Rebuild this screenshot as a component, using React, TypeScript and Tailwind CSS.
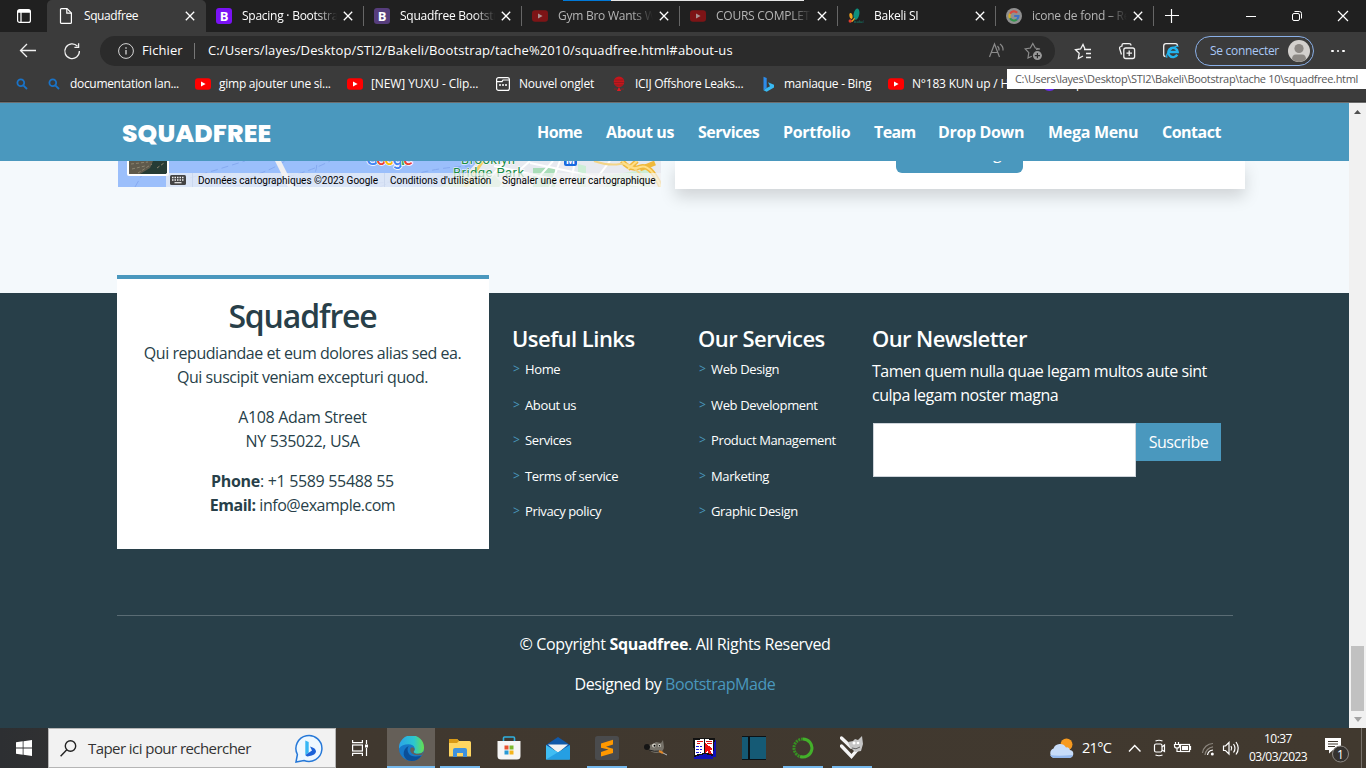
import React from "react";

type Kids = { children?: React.ReactNode; className?: string };

const YouTube = ({ dim = false }: { dim?: boolean }) => (
  <svg width="16" height="16" viewBox="0 0 16 16" className="shrink-0">
    <rect x="0" y="2.2" width="16" height="11.6" rx="3" fill={dim ? "#7d1416" : "#ff0000"} />
    <path d="M6 5.4L10.6 8L6 10.6Z" fill={dim ? "#a89090" : "#fff"} />
  </svg>
);

const BootstrapIcon = ({ dark = false }: { dark?: boolean }) => (
  <span
    className={
      "flex h-4 w-4 shrink-0 items-center justify-center rounded-[3px] text-[13px] leading-none font-bold text-white " +
      (dark ? "bg-[#563d7c]" : "bg-[#7a12f5]")
    }
  >
    B
  </span>
);

const FileIcon = () => (
  <svg width="16" height="16" viewBox="0 0 16 16" className="shrink-0" fill="none" stroke="#fff" strokeWidth="1.2">
    <path d="M3.5 .6H9L13.4 5V14.4Q13.4 15.4 12.4 15.4H3.5Q2.5 15.4 2.5 14.4V1.6Q2.5 .6 3.5 .6Z" />
    <path d="M8.8 .8V5.2H13.2" />
  </svg>
);

const BakeliIcon = () => (
  <svg width="16" height="16" viewBox="0 0 17 16" className="shrink-0">
    <ellipse cx="9" cy="6" rx="3" ry="6" fill="#0f8f7c" transform="rotate(12 9 6)" />
    <ellipse cx="3.2" cy="8" rx="1.7" ry="3.2" fill="#f4a51c" transform="rotate(-10 3.2 8)" />
    <circle cx="2.4" cy="13.3" r="1.8" fill="#e23b2e" />
    <path d="M4 14L7 10.5" stroke="#f4a51c" strokeWidth="1.5" />
    <text x="6.5" y="15.8" fontSize="4.4" fontFamily="Open Sans" fill="#0f8f7c">bakeli</text>
  </svg>
);

const GoogleIcon = () => (
  <svg width="16" height="16" viewBox="0 0 16 16" className="shrink-0">
    <circle cx="8" cy="8" r="8" fill="#909090" />
    <g fill="none" strokeWidth="2.2">
      <path d="M11.2 4.7A4.6 4.6 0 0 0 4 5.7" stroke="#d94a3e" />
      <path d="M4 5.7A4.6 4.6 0 0 0 4 10.3" stroke="#d5ad23" />
      <path d="M4 10.3A4.6 4.6 0 0 0 10.9 11.5" stroke="#35944e" />
      <path d="M8.2 8H12.5A4.6 4.6 0 0 1 10.9 11.5" stroke="#3d72c4" />
    </g>
  </svg>
);

const Close = () => (
  <svg width="10" height="10" viewBox="0 0 10 10" className="shrink-0" stroke="#fff" strokeWidth="1.3">
    <path d="M.8 .8L9.2 9.2M9.2 .8L.8 9.2" />
  </svg>
);

function Tab({ icon, title, dim }: { icon: React.ReactNode; title: string; dim?: boolean }) {
  return (
    <div className="relative flex h-8 w-[158px] shrink-0 items-center pl-[10px]">
      {icon}
      <span
        className={
          "ml-[10px] w-[95px] overflow-hidden whitespace-nowrap text-[12px] tracking-[-0.25px] [mask-image:linear-gradient(to_right,black_78%,transparent)] " +
          (dim ? "text-[#b4b4b4]" : "text-white")
        }
      >
        {title}
      </span>
      <span className="ml-[6px]"><Close /></span>
      <span className="absolute top-[6px] right-0 h-5 w-px bg-[#666]" />
    </div>
  );
}

function TabStrip() {
  return (
    <div className="relative flex h-8 bg-[#202020] text-white">
      <div className="flex w-[47px] shrink-0 items-center pl-[17px]">
        <svg width="14" height="14" viewBox="0 0 14 14" fill="none" stroke="#fff" strokeWidth="1.2">
          <rect x=".6" y=".6" width="12.8" height="12.8" rx="2" />
          <path d="M.6 3.2H13.4M4 3.2V13.4" />
          <path d="M1 2H13" strokeWidth="2" />
        </svg>
      </div>
      <div className="flex w-[159px] shrink-0 items-center rounded-t-[5px] bg-[#3b3b3b] pl-[11px]">
        <FileIcon />
        <span className="ml-[10px] w-[101px] text-[12px] tracking-[-0.4px]">Squadfree</span>
        <Close />
      </div>
      <Tab icon={<BootstrapIcon />} title="Spacing · Bootstrap" />
      <Tab icon={<BootstrapIcon dark />} title="Squadfree Bootstrap" />
      <Tab icon={<YouTube dim />} title="Gym Bro Wants Wo" dim />
      <Tab icon={<YouTube dim />} title="COURS COMPLET D" dim />
      <Tab icon={<BakeliIcon />} title="Bakeli SI" />
      <Tab icon={<GoogleIcon />} title="icone de fond – Rec" dim />
      <div className="flex flex-1 items-center">
        <svg width="212" height="32" viewBox="1154 0 212 32" fill="none" stroke="#fff" strokeWidth="1.2">
          <path d="M1165 15.5H1179M1171.5 9V23" />
          <path d="M1246 16.5H1256" strokeWidth="1" />
          <rect x="1292.5" y="13.5" width="7" height="7" rx="1.5" strokeWidth="1" />
          <path d="M1294.500 11.500H1299.500Q1301.500 11.500 1301.500 13.500V18.500" strokeWidth="1" />
          <path d="M1338 11L1348 21M1348 11L1338 21" />
        </svg>
      </div>
      <div className="absolute top-0 left-[563px] flex h-px w-[241px]">
        <span className="w-12 bg-[#0078d7]" />
        <span className="flex-1 bg-[#e6e6e6]" />
      </div>
    </div>
  );
}

function Toolbar() {
  return (
    <div className="flex h-9 items-center bg-[#3b3b3b] text-white">
      <svg width="100" height="36" viewBox="0 32 100 36" className="shrink-0" fill="none" stroke="#f2f2f2" strokeWidth="1.3">
        <path d="M20.500 50.500H36M27 44L20.500 50.500L27 57" />
        <path d="M77.500 46.300A7.300 7.300 0 1 0 79.400 51" />
        <path d="M78.600 43.200V47.400H74.400" />
      </svg>
      <div className="mt-px flex h-[30px] w-[955px] items-center rounded-full bg-[#2b2b2b] pl-[18px]">
        <svg width="16" height="16" viewBox="0 0 16 16" fill="none" stroke="#d6d6d6" className="shrink-0">
          <circle cx="8" cy="8" r="7.400" />
          <path d="M8 7V11.500M8 4.300V5.700" strokeWidth="1.300" />
        </svg>
        <span className="ml-2 w-[52px] text-[13px] tracking-[0.1px]">Fichier</span>
        <span className="h-4 w-px bg-[#777]" />
        <span className="ml-[13px] w-[780px] text-[13px] tracking-[0.115px] whitespace-nowrap">
          C:/Users/layes/Desktop/STI2/Bakeli/Bootstrap/tache%2010/squadfree.html#about-us
        </span>
        <svg width="56" height="20" viewBox="988 41 56 20" fill="none" stroke="#8c8c8c" strokeWidth="1.2" className="shrink-0">
          <path d="M989.500 57L994.500 44L999.500 57M991.300 52.500H997.700M997.500 46Q999.500 48 999 50.500M1000 44Q1003.500 46.500 1003 50.500" />
          <path d="M1036 49.500L1040 49L1035.300 48L1032.800 43.500L1030.300 48L1025.200 49L1028.800 52.700L1028 58L1031.800 56.200" />
          <circle cx="1037.400" cy="55.600" r="4.500" fill="#999" stroke="none" />
          <path d="M1037.400 53V58.200M1034.800 55.600H1040" stroke="#2b2b2b" />
        </svg>
      </div>
      <svg width="140" height="36" viewBox="1055 32 140 36" className="shrink-0" fill="none" stroke="#f2f2f2" strokeWidth="1.3">
        <path d="M1085 49L1083 44.500L1080.600 49L1075.500 49.800L1079.200 53.300L1078.300 58.500L1083 56" />
        <path d="M1084 49.500H1091M1086 53.500H1091M1086 57.500H1091" />
        <rect x="1123.800" y="48" width="10.800" height="10.500" rx="2" />
        <path d="M1129.200 50.500V56M1126.500 53.200H1132" />
        <path d="M1121.500 54.500L1119.600 48.500Q1119.200 47 1120.700 46.500L1122 46V45Q1122 43.700 1123.500 43.700H1129Q1131 43.700 1131 45.500" />
        <path d="M1165.500 56.500Q1163.700 56.500 1163.700 54.500V46Q1163.700 43.700 1166 43.700H1175.500Q1177.500 43.700 1177.500 46" />
        <path d="M1177.200 54.600A4.700 4.700 0 1 1 1177.700 52H1169" stroke="#23b4ee" strokeWidth="2.4" />
        <path d="M1167 57.800Q1165.500 54 1171 49.500T1178.500 46.500" stroke="#23b4ee" strokeWidth="1.200" />
      </svg>
      <div className="mt-px flex h-[30px] w-[119px] items-center rounded-full border border-[#8ab0e8] pl-[14px]">
        <span className="w-[78px] text-[12px] tracking-[-0.3px] whitespace-nowrap text-[#a9c7f5]">Se connecter</span>
        <svg width="22" height="22" viewBox="0 0 22 22" className="shrink-0">
          <circle cx="11" cy="11" r="11" fill="#d3d0cd" />
          <circle cx="11" cy="8.500" r="4.600" fill="#8c8884" />
          <path d="M4 19.300Q4 14.500 8 14.500H14Q18 14.500 18 19.300Q15 22 11 22T4 19.300Z" fill="#8c8884" />
        </svg>
      </div>
      <div className="mt-[2px] ml-[17px] flex gap-[3px]">
        <span className="size-[2.5px] rounded-full bg-white" />
        <span className="size-[2.5px] rounded-full bg-white" />
        <span className="size-[2.5px] rounded-full bg-white" />
      </div>
    </div>
  );
}

const Magnifier = () => (
  <svg width="12" height="12" viewBox="0 0 12 12" fill="none" stroke="#1a73c7" strokeWidth="1.800" className="shrink-0">
    <circle cx="4.800" cy="4.800" r="3.400" />
    <path d="M7.300 7.300L11 11" />
  </svg>
);

const Mark = ({ children, className = "" }: Kids) => (
  <div className={"flex shrink-0 items-center gap-2 text-[12px] whitespace-nowrap text-white " + className}>{children}</div>
);

function Bookmarks() {
  return (
    <div className="relative flex h-[34px] items-center border-b border-[#333] bg-[#3b3b3b] pb-[2px] pl-[16px]">
      <Mark className="w-8"><Magnifier /></Mark>
      <Mark className="w-[147px] tracking-[-0.32px]"><Magnifier /><span className="ml-[2px]">documentation lan...</span></Mark>
      <Mark className="w-[152px] tracking-[-0.25px]"><YouTube />gimp ajouter une si...</Mark>
      <Mark className="w-[148px] tracking-[-0.1px]"><YouTube />[NEW] YUXU - Clip...</Mark>
      <Mark className="w-[116px] tracking-[-0.2px]">
        <svg width="16" height="16" viewBox="0 0 16 16" fill="none" stroke="#fff" strokeWidth="1.200">
          <rect x="1.600" y="1.600" width="12.800" height="12.800" rx="2" />
          <path d="M1.600 5.600H7L8 4H14.400" />
          <path d="M4 9H12" strokeDasharray="2 1" strokeWidth="1.600" />
        </svg>
        Nouvel onglet
      </Mark>
      <Mark className="w-[149px] tracking-[-0.27px]">
        <svg width="16" height="16" viewBox="0 0 16 16">
          <circle cx="8" cy="5.800" r="5.300" fill="#c4161c" />
          <path d="M3.500 4H12.500M3 6.500H13M4 9H12" stroke="#8d1a1e" strokeWidth=".8" />
          <path d="M8 11L10.200 15H5.800Z" fill="#e01b22" />
          <path d="M3 13H6M10 13H13" stroke="#8d2023" />
        </svg>
        ICIJ Offshore Leaks...
      </Mark>
      <Mark className="w-[128px] tracking-[-0.25px]">
        <svg width="16" height="16" viewBox="0 0 16 16">
          <path d="M3.500 .8L6.700 2V12L3.500 14.300Z" fill="#2d8bea" />
          <path d="M3.500 14.300L6.700 12L10 10.300L8 6.200L14 8.700V11.400L6.700 15.700Z" fill="#39b9f2" />
        </svg>
        maniaque - Bing
      </Mark>
      <Mark className="w-[154px] tracking-[-0.2px]"><YouTube />N°183 KUN up / HU</Mark>
      <Mark className="gap-[6px]"><span className="h-[15px] w-[15px] rounded-full bg-[#6b2cf0]" />Expo</Mark>
      <div className="absolute top-px right-0 z-10 flex h-5 w-[359px] items-center bg-white pl-2 text-[11px] tracking-[-0.32px] whitespace-nowrap text-[#575757]">
        C:\Users\layes\Desktop\STI2\Bakeli\Bootstrap\tache 10\squadfree.html
      </div>
    </div>
  );
}

function SiteNav() {
  return (
    <nav className="relative z-10 flex h-[58px] items-center bg-[#4a98be] pl-[122px] text-[16px] font-bold whitespace-nowrap text-white">
      <span className="w-[415px] pt-[2px] font-[Poppins,Inter,sans-serif] text-[25px] leading-none font-extrabold tracking-[0.12px]">SQUADFREE</span>
      <a className="w-[69px] tracking-[-0.6px]">Home</a>
      <a className="w-[92px] tracking-[-0.4px]">About us</a>
      <a className="w-[85px] tracking-[-0.5px]">Services</a>
      <a className="w-[91px] tracking-[-0.3px]">Portfolio</a>
      <a className="w-[64px] tracking-[-0.6px]">Team</a>
      <a className="w-[110px] tracking-[-0.35px]">Drop Down</a>
      <a className="w-[114px] tracking-[-0.3px]">Mega Menu</a>
      <a className="tracking-[-0.5px]">Contact</a>
    </nav>
  );
}

function MapStrip() {
  return (
    <div className="relative h-[26px] w-[543px] overflow-hidden">
      <svg width="543" height="26" viewBox="118 161 543 26" className="block" fontFamily="Roboto, sans-serif">
        <rect x="118" y="161" width="543" height="26" fill="#9bbffb" />
        <g fill="none" stroke="#86aaf0" strokeDasharray="7 4">
          <path d="M135 187L150 161M190 178L245 161M205 187Q260 178 285 161M222 187Q290 182 330 161M300 187Q320 175 316 161M355 187Q380 180 460 180M380 187Q420 168 470 166M395 187Q430 175 475 172" />
        </g>
        <path d="M275 161L281 161L294 187H288Z" fill="#f0eff0" />
        <path d="M452 187L463 177L478 161H661V187Z" fill="#e8eaf0" />
        <path d="M440 187L465 174L490 170L505 187Z" fill="#c5e8cc" />
        <path d="M533 187V168H555V187Z" fill="#a9ddb8" />
        <path d="M578 187V164L586 166V187ZM610 175L650 169V187H605Z" fill="#cdeed6" />
        <g fill="none" stroke="#fff" strokeWidth="2">
          <path d="M488 180L505 161M500 187L530 161M530 187L553 161M494 166L575 184M530 163L640 186M560 161L550 187M610 161L590 187M575 161L570 187" />
        </g>
        <path d="M465 187L483 161" stroke="#f6cf65" strokeWidth="3" />
        <g fill="none">
          <path d="M622 161Q630 171 640 167T661 187M628 169L637 161M655 163L640 169" stroke="#f0b93c" strokeWidth="5" />
          <path d="M594 161Q608 166 620 164T645 180" stroke="#f3d588" strokeWidth="2" />
          <path d="M622 161Q630 171 640 167T661 187M628 169L637 161" stroke="#ffe08a" strokeWidth="2" />
        </g>
        <rect x="127" y="155" width="42" height="21" rx="2" fill="#fff" />
        <rect x="129" y="155" width="38" height="19" fill="#263c35" />
        <path d="M129 161H153L150 168L140 174H129Z" fill="#5f5a4c" />
        <path d="M131 164L148 162M132 169L145 166M138 173L152 164M157 168L164 163" stroke="#8b8470" strokeWidth="1" strokeDasharray="3 2" />
        <text x="366" y="165" fontSize="18" fontWeight="500" stroke="#fff" strokeWidth="1.500" paintOrder="stroke" textLength="47">
          <tspan fill="#4285f4">G</tspan><tspan fill="#ea4335">o</tspan><tspan fill="#fbbc04">o</tspan><tspan fill="#4285f4">g</tspan><tspan fill="#34a853">l</tspan><tspan fill="#ea4335">e</tspan>
        </text>
        <g fill="#188a45" stroke="#fff" strokeWidth="1" paintOrder="stroke" fontSize="13">
          <text x="461" y="164" textLength="54">Brooklyn</text>
          <text x="453" y="177" textLength="71">Bridge Park</text>
        </g>
        <rect x="564" y="152" width="13" height="14" rx="2" fill="#1769e0" />
        <text x="566" y="164" fontSize="10" fontWeight="700" fill="#fff">M</text>
      </svg>
      <div className="absolute right-0 bottom-0 flex h-[14px] w-[495px] items-center bg-[#f5f5f5]/70 font-[Roboto] text-[10px] whitespace-nowrap text-black">
        <svg width="16" height="10" viewBox="0 0 16 10" className="ml-1 shrink-0">
          <rect width="16" height="10" rx="1.500" fill="#444" />
          <path d="M2 2.500H14M2 5H14" stroke="#eee" strokeWidth="1.300" strokeDasharray="1.500 1" />
          <path d="M4.500 7.700H11.500" stroke="#eee" strokeWidth="1.200" />
        </svg>
        <span className="ml-[6px] w-[192px] shrink-0 border-l border-[#cbd8ee] pl-[5px] tracking-[-0.03px]">Données cartographiques ©2023 Google</span>
        <span className="w-[118px] shrink-0 border-l border-[#cbd8ee] pl-[5px]">Conditions d'utilisation</span>
        <span className="shrink-0">Signaler une erreur cartographique</span>
      </div>
    </div>
  );
}

function LinkColumn({ title, items, className }: { title: string; items: string[]; className: string }) {
  return (
    <div className={"shrink-0 pt-[30px] " + className}>
      <h4 className="-ml-px text-[22px] leading-[30px] font-semibold tracking-[-0.52px] whitespace-nowrap">{title}</h4>
      <ul className="pt-[5px]">
        {items.map((item) => (
          <li key={item} className="flex h-[35.500px] items-start gap-[5px] text-[13px] leading-[22px] tracking-[-0.37px] whitespace-nowrap">
            <span className="w-[7px] text-[12px] text-[#4a98be]">&gt;</span>
            {item}
          </li>
        ))}
      </ul>
    </div>
  );
}

function Footer() {
  return (
    <footer className="h-[435px] bg-[#283f49] pl-[117px] text-[16px] leading-6 text-white">
      <div className="flex h-[322px]">
        <div className="relative -mt-[18px] h-[274px] w-[372px] shrink-0 border-t-4 border-[#4a98be] bg-white pt-[18px] pr-px text-center text-[#283f49]">
          <h2 className="mb-[6px] text-[32px] leading-[38px] font-semibold tracking-[-1.15px]">Squadfree</h2>
          <p className="mb-4 tracking-[-0.45px]">Qui repudiandae et eum dolores alias sed ea.<br />Qui suscipit veniam excepturi quod.</p>
          <p className="mb-4 tracking-[-0.36px]">A108 Adam Street<br />NY 535022, USA</p>
          <p className="tracking-[-0.32px]"><b>Phone</b>: +1 5589 55488 55</p>
          <p className="tracking-[-0.47px]"><b>Email:</b> info@example.com</p>
        </div>
        <LinkColumn className="w-[210px] pl-6" title="Useful Links" items={["Home", "About us", "Services", "Terms of service", "Privacy policy"]} />
        <LinkColumn className="w-[174px]" title="Our Services" items={["Web Design", "Web Development", "Product Management", "Marketing", "Graphic Design"]} />
        <div className="pt-[30px] whitespace-nowrap">
          <h4 className="-ml-px text-[22px] leading-[30px] font-semibold tracking-[-0.62px]">Our Newsletter</h4>
          <p className="mt-[6px] -ml-px tracking-[-0.47px]">Tamen quem nulla quae legam multos aute sint<br />culpa legam noster magna</p>
          <div className="mt-4 flex items-start">
            <div className="h-[54px] w-[263px] border border-[#ced4da] bg-white" />
            <button className="h-[38px] w-[85px] bg-[#4a98be] tracking-[-0.45px]">Suscribe</button>
          </div>
        </div>
      </div>
      <div className="w-[1116px] border-t border-[#5a6c74] pt-4 text-center">
        <p className="tracking-[-0.33px]">© Copyright <b>Squadfree</b>. All Rights Reserved</p>
        <p className="mt-4 tracking-[-0.43px]">Designed by <span className="text-[#4a98be]">BootstrapMade</span></p>
      </div>
    </footer>
  );
}

function Scrollbar() {
  return (
    <div className="flex w-[17px] flex-col items-center bg-[#f1f1f1] pt-[7px]">
      <svg width="7" height="4" viewBox="0 0 7 4"><path d="M3.500 0L7 4H0Z" fill="#505050" /></svg>
      <div className="mt-[532px] h-[65px] w-[13px] bg-[#c1c1c1]" />
      <svg width="8" height="5" viewBox="0 0 8 5" className="mt-[6px]"><path d="M4 5L0 0H8Z" fill="#a3a3a3" /></svg>
    </div>
  );
}

const Slot = ({ children, running = false }: Kids & { running?: boolean }) => (
  <div className="relative flex h-10 w-[49px] shrink-0 items-center justify-center">
    {children}
    {running && <span className="absolute bottom-0 h-[2px] w-10 bg-[#76b9ed]" />}
  </div>
);

function Taskbar() {
  return (
    <div className="flex h-10 items-center bg-linear-to-r from-[#2d2f32] via-[#40382f] via-25% to-[#41392f] text-white">
      <div className="flex w-12 shrink-0 justify-center">
        <svg width="16" height="16" viewBox="0 0 16 16" fill="#fff">
          <path d="M0 2.300L6.700 1.300V7.500H0ZM7.500 1.200L16 0V7.500H7.500ZM0 8.400H6.700V14.700L0 13.700ZM7.500 8.400H16V16L7.500 14.800Z" />
        </svg>
      </div>
      <div className="flex h-10 w-[288px] shrink-0 items-center border border-[#b5b5b5] bg-[#f2f2f2] pl-[11px]">
        <svg width="17" height="17" viewBox="0 0 17 17" fill="none" stroke="#222" strokeWidth="1.400">
          <circle cx="10.500" cy="6" r="5.200" /><path d="M6.800 9.800L.6 16.300" />
        </svg>
        <span className="ml-[11px] w-[207px] text-[15px] tracking-[-0.56px] whitespace-nowrap text-[#333]">Taper ici pour rechercher</span>
        <svg width="29" height="29" viewBox="0 0 29 29">
          <path d="M1 28L2.400 20.500A13 13 0 1 1 9 26.500Z" fill="#eef8ff" stroke="#2678d8" strokeWidth="1.500" />
          <path d="M10.300 6.500L13.700 8V18.700L10.300 21Z" fill="#36b7f4" />
          <path d="M10.300 21L13.700 18.700L17 16.500L15 12.400Q21 14 21 17.500T13.500 22.300Q11.500 23 10.300 21Z" fill="#1b62d8" />
        </svg>
      </div>
      <div className="flex w-[51px] shrink-0 pl-4">
        <svg width="16" height="16" viewBox="0 0 16 16" fill="none" stroke="#fff" strokeWidth="1.200">
          <path d="M.6 0V2.600H10.400V0M.6 16V13.400H10.400V16" /><rect x=".6" y="5" width="9.800" height="6" />
          <path d="M14.500 0V4M14.500 8V16" /><path d="M13 6H16" strokeWidth="3" />
        </svg>
      </div>
      <div className="relative flex h-10 w-12 shrink-0 items-center justify-center bg-[#655f58]">
        <svg width="25" height="25" viewBox="0 0 24 24">
          <defs>
            <linearGradient id="edgeTop" x1="0" x2="1"><stop offset="0" stopColor="#2ba4e8" /><stop offset=".6" stopColor="#2cc6cf" /><stop offset="1" stopColor="#67e04c" /></linearGradient>
          </defs>
          <circle cx="12" cy="12" r="12" fill="#1679c9" />
          <path d="M0 11A12 12 0 0 1 24 11.500Q24 17 18.500 17Q14 17 14 14.800Q15.500 13.500 15 11.500Q14 8 9 8Q3 8 0 12Z" fill="url(#edgeTop)" />
          <path d="M9.300 9.500Q7 13 9.500 17T21.500 19Q18 24 12 24T4.500 18Q4 12 9.300 9.500Z" fill="#0b4f98" />
          <path d="M11.500 11Q9.500 14 12.500 16.800T22.300 17.900L24 13Q23 17 18.500 17Q13.800 17 14 14.800Q16 13 13.800 11Z" fill="#655f58" />
        </svg>
        <span className="absolute bottom-0 h-[2px] w-12 bg-[#76b9ed]" />
      </div>
      <Slot running>
        <svg width="22" height="19" viewBox="0 0 22 19">
          <path d="M0 1.500Q0 0 1.500 0H8L10 2H20.500Q22 2 22 3.500V17.500H0Z" fill="#ffd661" /><path d="M0 0H8L10 2L8 4H0Z" fill="#d99a16" />
          <path d="M4 18V11Q4 9 6 9H16Q18 9 18 11V18H14V14H8V18Z" fill="#3f92dd" />
        </svg>
      </Slot>
      <Slot>
        <svg width="24" height="24" viewBox="0 0 24 24">
          <path d="M6.500 6V2Q6.500 1 7.500 1H16.500Q17.500 1 17.500 2V6" fill="none" stroke="#2fb0df" strokeWidth="1.600" />
          <path d="M.5 5H23.500V20Q23.500 23.500 20 23.500H4Q.5 23.500 .5 20Z" fill="#f5f5f5" />
          <path d="M7.500 9.500H11.500V13.500H7.500Z" fill="#e8502e" /><path d="M12.500 9.500H16.500V13.500H12.500Z" fill="#7bb82c" />
          <path d="M7.500 14.500H11.500V18.500H7.500Z" fill="#2799d6" /><path d="M12.500 14.500H16.500V18.500H12.500Z" fill="#f4b51c" />
        </svg>
      </Slot>
      <Slot>
        <svg width="24" height="23" viewBox="0 0 24 23">
          <path d="M0 8L12 0L24 8V12H0Z" fill="#1159a8" /><path d="M2 7.500H22L12 16Z" fill="#f3f3f3" />
          <path d="M0 8L24 22.500H0Z" fill="#3fbdf3" /><path d="M24 8V22.500H0Z" fill="#259fe3" />
        </svg>
      </Slot>
      <Slot running>
        <svg width="24" height="24" viewBox="0 0 24 24">
          <rect width="24" height="24" rx="2.500" fill="#4a4b4d" />
          <path d="M6 7.500L18 3.800V8.500L11 10.800L18 12.700V17L6 20.500V16L13.500 13.500L6 11.800Z" fill="#ff9800" />
        </svg>
      </Slot>
      <Slot>
        <svg width="24" height="18" viewBox="0 0 24 18">
          <path d="M2 7L9 5L12 3L17 4L19 1L20 8Q20 13 13 14Q7 14 5 10Z" fill="#77736a" />
          <circle cx="3" cy="8" r="3" fill="#151515" /><circle cx="10" cy="6.500" r="1.900" fill="#dedbd0" /><circle cx="15.500" cy="6.500" r="1.500" fill="#dedbd0" />
          <circle cx="10.500" cy="6.800" r="1" /><circle cx="15.500" cy="6.800" r=".8" />
          <path d="M5 11Q10 13 17 12" stroke="#222" fill="none" /><path d="M15 12L19 14" stroke="#e18a2c" strokeWidth="2" /><path d="M19 14L23 16" stroke="#bbb" />
        </svg>
      </Slot>
      <Slot>
        <svg width="24" height="22" viewBox="0 0 24 22" shapeRendering="crispEdges">
          <path d="M3 3H23V20H20V22H1V18Z" fill="#1010b8" /><path d="M0 1H22L20 19L12 17L1 20Z" fill="#111" />
          <path d="M2 3L11 2V16L2 18Z" fill="#fff" /><path d="M12 2L20 3V17L12 16Z" fill="#fff" />
          <path d="M4 4H10M13 4H19M4 6H7M14 6H19" stroke="#e01010" strokeWidth="1" /><path d="M3 9H9M3 12H9M3 15H8" stroke="#1818e0" strokeWidth="1" strokeDasharray="3 1" />
          <path d="M12 6L20 12L17 13L19 17H16L15 14L12 16Z" fill="#f01010" />
        </svg>
      </Slot>
      <Slot>
        <svg width="24" height="24" viewBox="0 0 24 24"><rect width="24" height="24" fill="#0b1216" /><path d="M0 1H6V23H0ZM8 1H24V23H8Z" fill="#155a75" /></svg>
      </Slot>
      <Slot running>
        <svg width="22" height="22" viewBox="0 0 22 22" fill="none">
          <path d="M11 2A9 9 0 1 1 8 19.500" stroke="#43b02a" strokeWidth="3" />
          <path d="M11 2A9 9 0 0 0 8 19.500" stroke="#369022" strokeWidth="3" strokeDasharray="2 .8" />
        </svg>
      </Slot>
      <Slot running>
        <svg width="24" height="24" viewBox="0 0 24 24">
          <path d="M1.500 2L11 11M1.500 10L11.500 20.500L17 14" stroke="#f4f4f4" strokeWidth="3.400" fill="none" strokeLinecap="round" />
          <path d="M8 6L13 5L15 3L18 4L22 0L23 8L21 15L15 16L10 11Z" fill="#c5c5c5" />
          <circle cx="14" cy="7" r="1.500" fill="#fff" /><circle cx="18" cy="7" r="1.300" fill="#fff" /><path d="M12 12Q16 14 20 11" stroke="#666" fill="none" />
        </svg>
      </Slot>
      <div className="flex h-10 flex-1 items-center pl-[173px]">
        <svg width="25" height="21" viewBox="0 0 25 21" className="shrink-0">
          <circle cx="17.500" cy="6.500" r="6" fill="#f79a1f" />
          <path d="M5 20A5 5 0 0 1 4.500 10.500A7 7 0 0 1 17 9.500Q20 8.500 21 12Q24.500 12.500 24.300 16T20 20Z" fill="#c7dcf8" />
          <path d="M5 20A5 5 0 0 1 1 17Q8 18.500 24 17Q23 20 20 20Z" fill="#94b8ec" />
        </svg>
        <span className="ml-[8px] w-[46px] text-[14.500px] tracking-[-0.7px]">21°C</span>
        <svg width="118" height="20" viewBox="1128 738 118 20" fill="none" stroke="#fff" strokeWidth="1.200" className="shrink-0">
          <path d="M1129 751.500L1134.700 745.500L1140.500 751.500" strokeWidth="1.400" />
          <rect x="1154.500" y="744" width="7.500" height="8" rx="1.500" /><path d="M1162 747L1164.500 745V751.500L1162 750M1155.500 741Q1159 739.500 1162.500 741M1155.500 755Q1159 756.500 1162.500 755" />
          <path d="M1175.500 742V744M1178.500 742V744M1174.500 744.500H1179.500V746Q1179.500 748 1177 748T1174.500 746ZM1177 748V751.500H1180" />
          <rect x="1180.500" y="744.500" width="9" height="7" /><path d="M1182 748H1188" strokeWidth="4" /><path d="M1190.500 746V750" />
          <g stroke="#8c867e"><path d="M1202.500 753A10.500 10.500 0 0 1 1213 743.500M1205 755A9 9 0 0 1 1213 746.800" /></g>
          <path d="M1207.500 755A6 6 0 0 1 1213 750" /><circle cx="1212.300" cy="754" r="1.500" fill="#fff" stroke="none" />
          <path d="M1223.500 746H1225.500L1229 742.500V754L1225.500 750.500H1223.500ZM1231 746Q1232.500 748.200 1231 750.500M1233.500 744Q1236.500 748.200 1233.500 752.500M1236 742Q1240.500 748.200 1236 754.500" />
        </svg>
        <div className="ml-[2px] w-[60px] shrink-0 text-center text-[12px] leading-[18px] tracking-[-0.55px] whitespace-nowrap">10:37<br />03/03/2023</div>
        <svg width="24" height="26" viewBox="0 0 24 26" className="mt-[3px] ml-[17px] shrink-0">
          <path d="M0 1H16V13H8L4 16.500V13H0Z" fill="#fff" /><path d="M3 4.500H13M3 7H13M3 9.500H10" stroke="#40382f" />
          <circle cx="15.500" cy="17" r="8" fill="#35322f" stroke="#8e8a86" />
          <text x="15.500" y="21.500" fontSize="12" fill="#fff" textAnchor="middle">1</text>
        </svg>
        <span className="ml-[12px] h-10 w-px bg-[#77716b]" />
      </div>
    </div>
  );
}

export default function App() {
  return (
    <div className="flex h-[768px] w-[1366px] flex-col overflow-hidden font-['Open_Sans','Noto_Sans',sans-serif]">
      <TabStrip />
      <Toolbar />
      <Bookmarks />
      <div className="h-px shrink-0 bg-[#6d6d6d]" />
      <main className="flex h-[625px] shrink-0">
        <div className="w-[1349px] overflow-hidden bg-[#f4f9fc]">
          <SiteNav />
          <div className="flex h-[132px] items-start gap-[14px] pl-[118px]">
            <MapStrip />
            <div className="flex h-7 w-[570px] items-start justify-center bg-white pr-[2px] shadow-[0_8px_16px_rgba(0,0,0,0.15)]">
              <button className="-mt-[26px] h-[38px] w-[127px] rounded-md bg-[#4a98be] pb-[3px] text-[16px] tracking-[-0.4px] text-white">Send Message</button>
            </div>
          </div>
          <Footer />
        </div>
        <Scrollbar />
      </main>
      <Taskbar />
    </div>
  );
}
